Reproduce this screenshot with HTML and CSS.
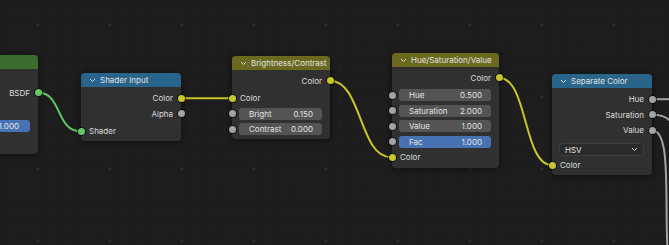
FILE: index.html
```html
<!DOCTYPE html>
<html lang="en">
<head>
    <meta charset="UTF-8">
    <title>Node Editor</title>
    <link rel="stylesheet" href="styles.css">
</head>
<body>
    <div class="canvas">
        <svg class="links" width="669" height="245" viewBox="0 0 669 245">
            <path class="link green" d="M38 92.5 C62 92.5 56 131.2 80 131.2"/>
            <path class="link yellow" d="M181 98.2 L232 98.2"/>
            <path class="link yellow" d="M330 80.7 C362 80.7 359 157.2 391 157.2"/>
            <path class="link yellow" d="M499 77.7 C528 77.7 523 165.2 552 165.2"/>
            <path class="link grey" d="M652 99.2 L669 99.2"/>
            <path class="link grey" d="M652 114.7 C690 114.7 660 150 720 200"/>
            <path class="link grey" d="M652 130.2 C672 130.2 664 200 668 260"/>
        </svg>

        <!-- partly hidden node on the left -->
        <div class="node node-bsdf">
            <div class="head green-head"></div>
            <div class="body">
                <div class="row out bsdf-row">BSDF<span class="sock s-green"></span></div>
                <div class="row field-row bsdf-field"><div class="field blue"><span></span><span>1.000</span></div></div>
            </div>
        </div>

        <div class="node node-shader-input">
            <div class="head blue-head"><svg class="chev" width="7" height="5"><polyline points="1,1 3.5,3.5 6,1"/></svg>Shader Input</div>
            <div class="body">
                <div class="row out">Color<span class="sock s-yellow"></span></div>
                <div class="row out">Alpha<span class="sock s-grey"></span></div>
                <div class="row in gap">Shader<span class="sock s-green"></span></div>
            </div>
        </div>

        <div class="node node-bc">
            <div class="head olive-head"><svg class="chev" width="7" height="5"><polyline points="1,1 3.5,3.5 6,1"/></svg>Brightness/Contrast</div>
            <div class="body">
                <div class="row out">Color<span class="sock s-yellow"></span></div>
                <div class="row in gap">Color<span class="sock s-yellow"></span></div>
                <div class="row field-row"><div class="field"><span>Bright</span><span>0.150</span></div><span class="sock s-grey"></span></div>
                <div class="row field-row"><div class="field"><span>Contrast</span><span>0.000</span></div><span class="sock s-grey"></span></div>
            </div>
        </div>

        <div class="node node-hsv">
            <div class="head olive-head"><svg class="chev" width="7" height="5"><polyline points="1,1 3.5,3.5 6,1"/></svg>Hue/Saturation/Value</div>
            <div class="body">
                <div class="row out">Color<span class="sock s-yellow"></span></div>
                <div class="row field-row gap"><div class="field"><span>Hue</span><span>0.500</span></div><span class="sock s-grey"></span></div>
                <div class="row field-row"><div class="field"><span>Saturation</span><span>2.000</span></div><span class="sock s-grey"></span></div>
                <div class="row field-row"><div class="field"><span>Value</span><span>1.000</span></div><span class="sock s-grey"></span></div>
                <div class="row field-row"><div class="field blue"><span>Fac</span><span>1.000</span></div><span class="sock s-grey"></span></div>
                <div class="row in">Color<span class="sock s-yellow"></span></div>
            </div>
        </div>

        <div class="node node-sep">
            <div class="head blue-head"><svg class="chev" width="7" height="5"><polyline points="1,1 3.5,3.5 6,1"/></svg>Separate Color</div>
            <div class="body">
                <div class="row out">Hue<span class="sock s-grey"></span></div>
                <div class="row out">Saturation<span class="sock s-grey"></span></div>
                <div class="row out">Value<span class="sock s-grey"></span></div>
                <div class="row field-row menu-row"><div class="menu"><span>HSV</span><svg class="chev small" width="7" height="5"><polyline points="1,1 3.5,3.5 6,1"/></svg></div></div>
                <div class="row in">Color<span class="sock s-yellow"></span></div>
            </div>
        </div>
    </div>
</body>
</html>
```

FILE: styles.css
```css
body {
    margin: 0;
    background: #1d1d1d;
    font-family: Inter, "DejaVu Sans", sans-serif;
}
.canvas {
    position: relative;
    width: 669px;
    height: 245px;
    overflow: hidden;
    background-color: #1d1d1d;
    background-image:
        radial-gradient(circle, #303030 1.1px, transparent 1.6px),
        radial-gradient(circle, #272727 0.7px, transparent 1.1px);
    background-size: 72px 72px, 14.4px 14.4px;
    background-position: 2px -11px, 2.2px 3.8px;
}
.links {
    position: absolute;
    left: 0;
    top: 0;
}
.link {
    fill: none;
    stroke-width: 2;
}
.link.green { stroke: #5fc65f; }
.link.yellow { stroke: #c8c62a; }
.link.grey { stroke: #a3a3a3; }

.node {
    position: absolute;
    background: #303030;
    border-radius: 4px;
    box-shadow: 0 1px 6px rgba(0, 0, 0, 0.55);
    font-size: 8px;
    color: #dedede;
}
.head {
    height: 14px;
    border-radius: 4px 4px 0 0;
    display: flex;
    align-items: center;
    padding-left: 8px;
    gap: 4px;
    color: #e2e2e2;
}
.green-head { background: #3b6d2c; }
.blue-head { background: #29658a; }
.olive-head { background: #6a691f; }
.chev polyline {
    fill: none;
    stroke: #d8d8d8;
    stroke-width: 1;
}
.body {
    padding: 3px 0 2px;
}
.row {
    position: relative;
    height: 15.5px;
    display: flex;
    align-items: center;
    padding: 0 8px;
}
.row.out {
    justify-content: flex-end;
}
.row.gap {
    margin-top: 2px;
}
.field-row {
    padding: 0 8px 0 7px;
}
.field {
    flex: 1;
    height: 12px;
    background: #545454;
    border-radius: 3px;
    display: flex;
    align-items: center;
    justify-content: space-between;
    padding: 0 9px 0 10px;
    color: #e4e4e4;
}
.field.blue {
    background: #4772b3;
}
.menu {
    flex: 1;
    height: 11px;
    background: #2a2a2a;
    border: 1px solid #3d3d3d;
    border-radius: 3px;
    display: flex;
    align-items: center;
    justify-content: space-between;
    padding: 0 5px 0 5px;
    color: #e4e4e4;
}
.menu-row {
    margin-top: 4px;
}

.sock {
    position: absolute;
    top: 50%;
    width: 7px;
    height: 7px;
    margin-top: -3.5px;
    border-radius: 50%;
    box-shadow: 0 0 0 1px rgba(0, 0, 0, 0.55);
}
.out .sock { right: -3.5px; }
.in .sock, .field-row .sock { left: -3.5px; }
.s-yellow { background: #c8c62a; }
.s-grey { background: #a3a3a3; }
.s-green { background: #63c763; }

.node-bsdf {
    left: -70px;
    top: 55px;
    width: 108px;
    height: 99px;
}
.bsdf-row {
    margin-top: 13px;
}
.bsdf-field {
    margin-top: 18px;
}
.bsdf-field .field {
    padding-right: 11px;
}
.node-shader-input {
    left: 81px;
    top: 73px;
    width: 100px;
}
.node-shader-input .body {
    padding-top: 3.5px;
}
.node-bc {
    left: 232px;
    top: 56px;
    width: 98px;
}
.node-hsv {
    left: 392px;
    top: 53px;
    width: 107px;
}
.node-hsv .body {
    padding-bottom: 3px;
}
.node-sep {
    left: 552px;
    top: 74px;
    width: 100px;
}
.node-sep .body {
    padding-top: 3.5px;
}
```
